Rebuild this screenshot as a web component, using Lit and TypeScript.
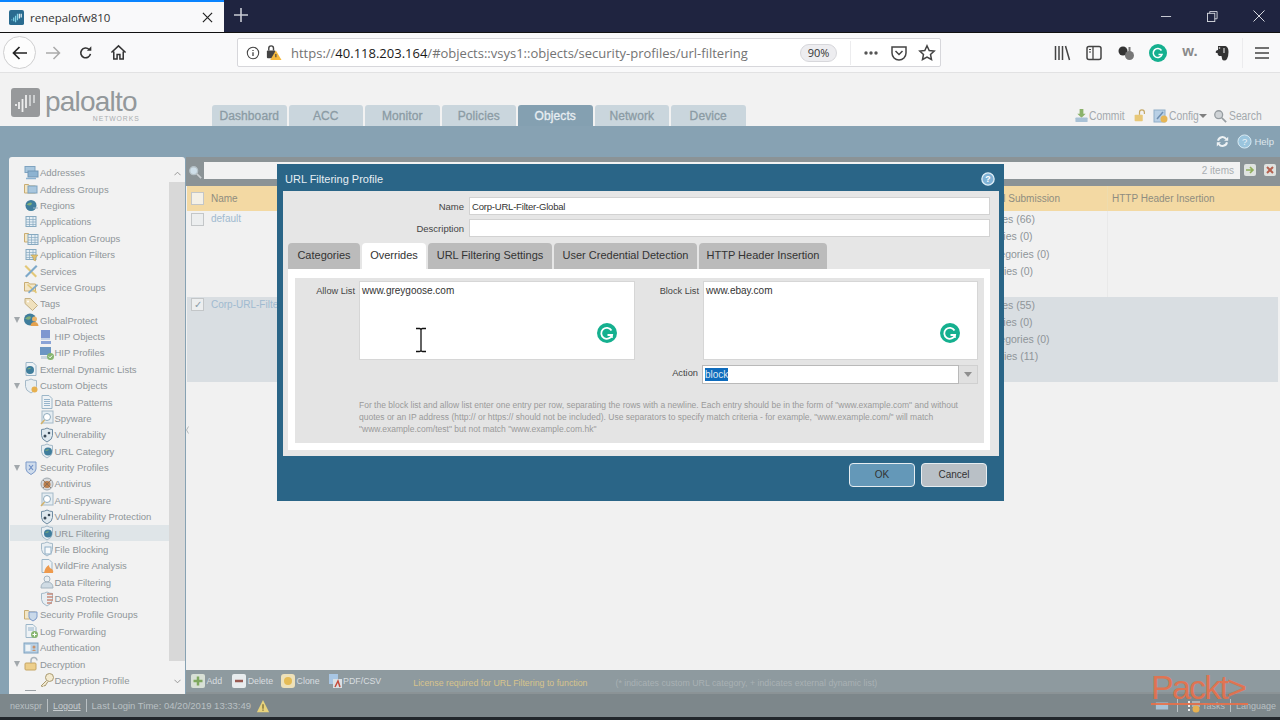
import { LitElement, html, css, svg } from "lit";
import { customElement } from "lit/decorators.js";

const i16 = (inner: unknown, cls = "ic") => html`<svg class=${cls} viewBox="0 0 16 16">${inner}</svg>`;

const globe = (x = 8, y = 8, r = 5) => svg`<circle cx=${x} cy=${y} r=${r} fill="#3f7d9c"/><path d="M${x - r + 1} ${y - 1}q${r - 1} -${r - 2} ${r} -1q-1 ${r - 2} -${r} 1z" fill="#7fae7a"/>`;
const docShape = svg`<path d="M3 1.500h7l3 3v10H3z" fill="#eef2f5" stroke="#9cb6c8"/>`;
const shieldShape = svg`<path d="M2.500 2.500q3 0 5.500-1.500q2.500 1.500 5.500 1.500v6q0 4-5.500 6.500q-5.500-2.500-5.500-6.500z" fill="#e8eef2" stroke="#a4b9c8"/>`;
const folder = svg`<path d="M1.500 3.500h4l1 1.500h6v7h-11z" fill="#f3e6c6" stroke="#c9ad72"/>`;
const gridLines = svg`<rect x="3" y="2.500" width="10" height="10" fill="#e4edf3" stroke="#86a9c0"/><path d="M3 5.500h10M3 8h10M3 10.500h10M6.500 3v9M10 3v9" stroke="#86a9c0" stroke-width=".7"/>`;

const icons: Record<string, unknown> = {
  net: svg`<rect x="2" y="1.500" width="10" height="6" fill="#a9c7de" stroke="#7fa3c0"/><rect x="5" y="6" width="10" height="6" fill="#8db3d1" stroke="#7297b5"/><path d="M3 13.500h10" stroke="#8db3d1" stroke-width="1.500"/>`,
  netf: svg`${folder}<rect x="5" y="5" width="9" height="7" fill="#a9c7de" stroke="#7fa3c0"/>`,
  globe: svg`${globe(8, 7.5, 5.5)}<path d="M10 10h5" stroke="#9fb7c6"/>`,
  table: gridLines,
  tablef: svg`${folder}<g transform="translate(2 2)">${gridLines}</g>`,
  filter: svg`${gridLines}<path d="M8 8h7l-2.500 3v3l-2-1v-2z" fill="#e0c070" stroke="#b89a4a" stroke-width=".5"/>`,
  tools: svg`<path d="M3 2l11 11-1.500 1.500L1.500 3.500z" fill="#e3c878"/><path d="M13 2L2 13l1.500 1.500L14.500 3.500z" fill="#7fa9c9"/>`,
  toolsf: svg`${folder}<path d="M5 5l9 8-1 1.500L4 6z" fill="#e3c878"/><path d="M14 5L5 13l1 1.500L15 6.500z" fill="#7fa9c9"/>`,
  tag: svg`<path d="M2 2.500h5.500l7 7-5 5-7.500-7z" fill="#f0e1bd" stroke="#c4b083"/><circle cx="5" cy="5.500" r="1" fill="#fff"/>`,
  gp: svg`${globe(7, 7.5, 6)}<circle cx="11.500" cy="7" r="2.500" fill="#e9b36a"/><path d="M7.500 14q.5-4 4-4t4 4z" fill="#e4a24f"/>`,
  hipo: svg`<rect x="2" y="1" width="9" height="8" fill="#7e97d0"/><rect x="2" y="9" width="9" height="2" fill="#c7d3e6"/><rect x="2" y="12" width="10" height="3" fill="#8aa3d6"/>`,
  hipp: svg`<rect x="1" y="2" width="11" height="8" fill="#6c96c2"/><rect x="2" y="11" width="8" height="3" fill="#cbd6de"/><circle cx="11.500" cy="11.500" r="3.500" fill="#86b56f"/><path d="M9.800 11.500l1.300 1.300 2-2.300" stroke="#fff" fill="none"/>`,
  edl: svg`${docShape}${globe(7, 9, 4)}`,
  custom: svg`${shieldShape}<circle cx="11.500" cy="11.500" r="3" fill="#e6b04f"/>`,
  doc: svg`${docShape}<path d="M5 5.500h6M5 7.500h6M5 9.500h6M5 11.500h6" stroke="#7fa3c0" stroke-width=".8"/>`,
  spy: svg`<rect x="3" y="1" width="11" height="12" fill="#e5edf2" stroke="#a4b9c8"/><circle cx="8" cy="7" r="3.500" fill="#fff" stroke="#8eaabd"/><path d="M5.500 10l-3.500 4" stroke="#d3b26a" stroke-width="1.500"/>`,
  vuln: svg`<path d="M2.500 2.500q3 0 5.500-1.500q2.500 1.500 5.500 1.500v6q0 4-5.500 6.500q-5.500-2.500-5.500-6.500z" fill="#dfe8ee" stroke="#6f8ca2"/><circle cx="6" cy="9" r="1.500" fill="#3a4a58"/><circle cx="10" cy="6" r="1.300" fill="#3a4a58"/>`,
  url: svg`${shieldShape}${globe(9, 8.5, 4)}`,
  secprof: svg`<path d="M3 2h10v7q0 3-5 5.500q-5-2.500-5-5.500z" fill="#cfdcec" stroke="#7d9ac9"/><path d="M6 5l4 5M10 5l-4 5" stroke="#6f8fc6" stroke-width="1.200"/>`,
  av: svg`<circle cx="8" cy="8" r="6" fill="#d6d9dc" stroke="#a0a8ae"/><circle cx="8" cy="8.500" r="3.500" fill="#bd7f4c"/><path d="M4 4l8 8M12 4l-8 8" stroke="#7f6a58" stroke-width=".8"/>`,
  file: svg`${shieldShape}<rect x="6" y="6" width="6" height="7" fill="#f7fafc" stroke="#90aec5"/>`,
  fire: svg`${docShape}<path d="M5 15q1-6 5-8 0 3 3 4 2 2 1 4z" fill="#ee9a4d"/>`,
  data: svg`<circle cx="8" cy="5" r="3" fill="#eaeff2" stroke="#a4b4c0"/><path d="M2 14q0-6 6-6t6 6z" fill="#cfdbe4" stroke="#a4b4c0"/>`,
  dos: svg`${shieldShape}<path d="M8 3h6M8 6h6M8 9h6M8 12h5" stroke="#c88a7a" stroke-width="1.500"/>`,
  spg: svg`${folder}<path d="M6 5h8v5q0 2-4 4q-4-2-4-4z" fill="#c9d9ea" stroke="#7d9ac9"/>`,
  log: svg`${docShape}<path d="M5 5h6M5 7h6" stroke="#7fa3c0" stroke-width=".8"/><circle cx="11.500" cy="11.500" r="3.500" fill="#86b56f"/><path d="M9.500 11.500h4M11.500 9.500v4" stroke="#fff"/>`,
  auth: svg`<rect x="1" y="3" width="14" height="10" fill="#b9d0e3" stroke="#7ea2c0"/><rect x="2.500" y="5" width="5" height="6" fill="#eef3f6"/><circle cx="11" cy="7" r="1.500" fill="#c8906a"/><path d="M9 11q2-3 4 0z" fill="#c8906a"/>`,
  dec: svg`<rect x="2" y="7" width="11" height="7" rx="1" fill="#edcf8c" stroke="#c6a664"/><path d="M8 7V4.500a3 3 0 0 1 6 0" fill="none" stroke="#aab4bb" stroke-width="1.500"/>`,
  key: svg`<circle cx="10.500" cy="5.500" r="4" fill="#f3ead0" stroke="#a99a70"/><path d="M7.500 8.500L2 14l2 .5 1-1 1 .5 3-4.500" fill="#f3ead0" stroke="#a99a70"/>`,
};

type Row = { t: string; i: string; lvl?: number; open?: boolean; sel?: boolean };
const tree: Row[] = [
  { t: "Addresses", i: "net" }, { t: "Address Groups", i: "netf" }, { t: "Regions", i: "globe" },
  { t: "Applications", i: "table" }, { t: "Application Groups", i: "tablef" }, { t: "Application Filters", i: "filter" },
  { t: "Services", i: "tools" }, { t: "Service Groups", i: "toolsf" }, { t: "Tags", i: "tag" },
  { t: "GlobalProtect", i: "gp", open: true }, { t: "HIP Objects", i: "hipo", lvl: 1 }, { t: "HIP Profiles", i: "hipp", lvl: 1 },
  { t: "External Dynamic Lists", i: "edl" }, { t: "Custom Objects", i: "custom", open: true },
  { t: "Data Patterns", i: "doc", lvl: 1 }, { t: "Spyware", i: "spy", lvl: 1 }, { t: "Vulnerability", i: "vuln", lvl: 1 }, { t: "URL Category", i: "url", lvl: 1 },
  { t: "Security Profiles", i: "secprof", open: true }, { t: "Antivirus", i: "av", lvl: 1 }, { t: "Anti-Spyware", i: "spy", lvl: 1 },
  { t: "Vulnerability Protection", i: "vuln", lvl: 1 }, { t: "URL Filtering", i: "url", lvl: 1, sel: true }, { t: "File Blocking", i: "file", lvl: 1 },
  { t: "WildFire Analysis", i: "fire", lvl: 1 }, { t: "Data Filtering", i: "data", lvl: 1 }, { t: "DoS Protection", i: "dos", lvl: 1 },
  { t: "Security Profile Groups", i: "spg" }, { t: "Log Forwarding", i: "log" }, { t: "Authentication", i: "auth" },
  { t: "Decryption", i: "dec", open: true }, { t: "Decryption Profile", i: "key", lvl: 1 },
];

const navTabs = ["Dashboard", "ACC", "Monitor", "Policies", "Objects", "Network", "Device"];
const grammarly = html`<svg class="gram" viewBox="0 0 20 20"><circle cx="10" cy="10" r="10" fill="#15b08f"/><path d="M14.500 7.500A5.500 5.500 0 1 0 15 12h-4.500" fill="none" stroke="#fff" stroke-width="1.800"/><path d="M15 12v3" stroke="#fff" stroke-width="1.500"/></svg>`;

@customElement("app-root")
export class AppRoot extends LitElement {
  static styles = css`
    :host { display: block; position: relative; width: 1280px; height: 720px; overflow: hidden; font-family: "Liberation Sans", Arial, sans-serif; font-size: 10px; background: #f1f1f1; color: #8f9599; }
    svg { display: block; flex: none; }
    .ic { width: 16px; height: 16px; }

    .tabbar { height: 33px; background: #1f2440; display: flex; align-items: stretch; border-bottom: 1px solid #111; box-sizing: border-box; }
    .btab { width: 224px; background: #f9f9fa; border-top: 2px solid #0a84ff; box-sizing: border-box; display: flex; align-items: center; padding: 0 11px 0 9px; gap: 6px; font: 11.500px "Open Sans", sans-serif; color: #333; }
    .btab span { flex: 1; }
    .plus { margin: 7px 0 0 9px; width: 16px; height: 16px; }
    .winbtns { margin-left: auto; display: flex; align-items: center; gap: 35px; padding-right: 15px; }

    .toolbar { height: 40px; background: #f9f9fa; border-bottom: 1px solid #e2e2e3; display: flex; align-items: center; box-sizing: border-box; }
    .back { width: 33px; height: 33px; margin-left: 3px; border: 1px solid #cfcfd0; border-radius: 50%; box-sizing: border-box; background: #fdfdfd; display: flex; align-items: center; justify-content: center; }
    .navs { display: flex; align-items: center; gap: 16px; margin-left: 8px; width: 193px; }
    .urlbar { width: 704px; height: 29px; background: #fff; border: 1px solid #d7d7db; border-radius: 2px; box-sizing: border-box; display: flex; align-items: center; padding: 0 4px 0 8px; font: 13px "Open Sans", sans-serif; color: #737373; white-space: nowrap; }
    .urlbar b { font-weight: 400; color: #1a1a1a; }
    .urlsp { margin-left: 9px; flex: 1; }
    .zoomp { height: 18px; width: 37px; background: #ededf0; border: 1px solid #d7d7db; border-radius: 9px; box-sizing: border-box; font-size: 11px; color: #333; display: flex; align-items: center; justify-content: center; margin-right: 13px; }
    .usep { width: 1px; height: 24px; background: #ececee; margin-right: 11px; }
    .urlic { display: flex; align-items: center; gap: 10px; }
    .tools { margin-left: auto; display: flex; align-items: center; padding-right: 9px; }
    .tools svg { width: 18px; height: 18px; margin-left: 14px; }
    .w { font: bold 15px "Liberation Sans", sans-serif; color: #8a8a8a; margin-left: 14px; width: 18px; text-align: center; margin-top: -4px; }
    .tsep { width: 1px; height: 30px; background: #ececee; margin: 0 -4px 0 11px; }

    .head { height: 53px; background: #f2f2f2; display: flex; align-items: flex-start; position: relative; }
    .logo { display: flex; margin: 15px 0 0 11px; width: 201px; }
    .logomark { width: 29px; height: 29px; }
    .logotext { margin-left: 5px; font: 28px/27px "Liberation Sans", sans-serif; color: #93989b; letter-spacing: -.8px; height: 44px; }
    .networks { display: block; font: 6.800px/7px "Liberation Sans", sans-serif; letter-spacing: .95px; color: #a9adb0; text-align: right; margin: 0 -3px 0 0; }
    .navtabs { display: flex; gap: 2px; margin-top: 32px; height: 21px; }
    .navtab { width: 74.500px; box-sizing: border-box; background: #cad6dd; color: #8b9ba4; font: 12px/22px "Liberation Sans", sans-serif; -webkit-text-stroke: .3px currentColor; letter-spacing: .1px; text-align: center; border-radius: 3px 3px 0 0; }
    .navtab.on { background: #84a0b1; color: #e8eef2; }
    .hright { margin-left: auto; display: flex; align-items: center; height: 17px; margin-top: 34px; padding-right: 19px; font: 12px "Liberation Sans", sans-serif; color: #a3a9ad; }
    .hright svg { width: 15px; height: 15px; }
    .hright span { transform: scaleX(.86); transform-origin: left; }
    .hcommit { width: 44px; }
    .hlock { width: 13px !important; }
    .hcfg { margin-left: 7px; width: 16px !important; height: 16px !important; }
    .hconfig { width: 30px; }
    .hcaret { border: 4px solid transparent; border-top: 4px solid #7f7f7f; border-bottom: 0; margin-right: 6px; }
    .hsearch { width: 14px !important; height: 14px !important; }
    .hsearchtxt { width: 32px; margin-left: 2px; }

    .band { height: 31px; background: #87a2b3; display: flex; justify-content: flex-end; align-items: center; padding-right: 6px; gap: 5px; color: #dfe7ec; font-size: 9.500px; }
    .bhelp { margin-left: 3px; }
    .bhelptxt { margin-left: -3px; }

    .work { height: 537px; display: grid; grid-template-columns: 9px 176px 1px 1fr; background: #87a2b3; }
    .side { grid-column: 2; background: #f2f2f2; border-radius: 3px 3px 0 0; display: flex; overflow: hidden; font-size: 9.500px; }
    .tree { flex: 1; padding-top: 7.600px; overflow: hidden; min-width: 0; }
    .row { height: 16.390px; display: flex; align-items: center; padding-left: 5px; white-space: nowrap; }
    .row.l1 { padding-left: 29.500px; }
    .row.cur { background: #dfe5e8; margin-left: 1px; padding-left: 28.500px; }
    .row .tw { width: 9px; flex: none; }
    .row .ic { margin-right: 1px; }
    .row.l1 .ic { margin-right: 0; }
    .tri { width: 0; height: 0; border: 3.500px solid transparent; border-top: 6px solid #a2a8ac; border-bottom: 0; }
    .treeend { width: 11px; height: 1px; background: #9ba1a5; margin: 1px 0 0 16px; }
    .sbar { width: 16px; display: flex; flex-direction: column; align-items: stretch; padding-top: 8px; }
    .sarrow { height: 17px; display: flex; align-items: center; justify-content: center; }
    .strack { background: #d8d8d8; height: 479px; }
    .sgap { height: 12px; }

    .main { grid-column: 4; display: flex; flex-direction: column; background: #8b9396; min-width: 0; position: relative; }
    .handle { position: absolute; left: 0; top: 269px; width: 3px; height: 8px; }
    .search { height: 29px; display: flex; align-items: center; padding-right: 3px; }
    .searchic { width: 18px; display: flex; justify-content: center; }
    .sinput { width: 1036px; height: 17px; background: #f2f2f2; display: flex; align-items: center; justify-content: flex-end; padding-right: 6px; box-sizing: border-box; color: #a9aeb1; margin-top: -3px; }
    .sbtns { margin-left: 4px; display: flex; gap: 8px; margin-top: -3px; }
    .sbtns svg { width: 12px; height: 12px; }
    .table { flex: 1; background: #f1f1f1; display: flex; flex-direction: column; padding-left: 1px; }
    .thead, .trow { display: grid; grid-template-columns: 19px 120px 610px 171px 171px 1fr; }
    .thead { height: 25px; background: #f3d9a3; color: #8f8d80; align-items: center; font-size: 10px; }
    .trow { height: 85.500px; margin-right: 2px; }
    .trow.on { background: #d9dee2; }
    .cb { width: 13px; height: 13px; box-sizing: border-box; border: 1px solid #c3c6c8; background: #eceeef; margin: 1.500px 0 0 4px; font-size: 10px; line-height: 11px; text-align: center; color: #8a9aa6; }
    .thead .cb { margin-top: 0; background: #f4f0e6; }
    .nm { color: #a0bad0; padding: 2px 0 0 5px; white-space: nowrap; overflow: hidden; }
    .thead .nm { color: #8f8d80; padding-top: 0; }
    .cred { padding-left: 2px; line-height: 17.300px; white-space: nowrap; font-size: 10.500px; }
    .hd { border-left: 1px solid #e9e9e9; }
    .trow.on .hd { border-left-color: transparent; }
    .hcell { padding-left: 4px; border-left: 1px solid #eedcae; height: 100%; display: flex; align-items: center; }
    .hcred { justify-content: flex-end; padding-right: 47px; }
    .bbar { height: 22px; display: flex; align-items: center; background: #8e9a9f; color: #d9dee0; white-space: nowrap; margin-bottom: 2px; font-size: 8.800px; padding-left: 5px; }
    .bbar svg { width: 14px; height: 14px; }
    .a { display: flex; align-items: center; gap: 1.500px; }
    .a.del { margin-left: 10px; }
    .a.clone { margin-left: 8px; }
    .a.pdf { margin-left: 8px; }
    .lic { color: #d8c48c; margin: 3px 0 0 32px; }
    .ind { color: #a9b1b4; margin: 3px 0 0 28px; }

    .foot { height: 23px; background: #7d878b; color: #b9c0c3; display: flex; align-items: center; padding: 0 4px 0 10px; white-space: nowrap; font-size: 9px; }
    .foot u { color: #c7cdd0; }
    .lastlog { font-size: 9.500px; }
    .warn { margin-left: 5px; }
    .pipe { width: 1px; height: 13px; background: #b9c0c3; margin: 0 5px; }
    .pipe.w8 { margin: 0 8px; }
    .fr { margin-left: auto; display: flex; align-items: center; }
    .end { height: 3px; background: #22272c; }

    .modal { position: absolute; left: 277px; top: 164px; width: 727px; height: 337px; background: #2a6587; box-sizing: border-box; display: flex; flex-direction: column; }
    .mtitle { height: 27px; display: flex; align-items: center; justify-content: space-between; padding: 3px 9px 0 8px; box-sizing: border-box; color: #e6eef3; font-size: 11px; }
    .mbody { margin: 0 5px 0 6px; height: 265px; background: #e6e6e6; display: flex; flex-direction: column; color: #333; }
    .field { display: grid; grid-template-columns: 181px 521px; column-gap: 5px; align-items: center; height: 18px; margin-top: 4px; }
    .field:first-child { margin-top: 6px; }
    .field label { text-align: right; color: #444; font-size: 9.500px; }
    .inp { height: 18px; background: #fff; border: 1px solid #d2d2d2; box-sizing: border-box; padding-left: 2px; line-height: 18px; color: #333; font-size: 9.500px; letter-spacing: -.2px; }
    .mtabs { display: flex; gap: 2px; margin: 6px 0 0 5px; height: 26px; }
    .mtab { background: #bbbbbb; color: #333; border-radius: 4px 4px 0 0; font-size: 11px; line-height: 25px; text-align: center; box-sizing: border-box; white-space: nowrap; }
    .mtab.on { background: #fff; }
    .panel { margin-left: 5px; width: 702px; height: 181px; background: #fff; padding: 9px 6px 7px 7px; box-sizing: border-box; }
    .inner { height: 165px; background: #e4e4e4; box-sizing: border-box; display: flex; flex-direction: column; padding-top: 3px; }
    .lists { display: grid; grid-template-columns: 64px 276px 68px 275px; height: 79px; }
    .lists label { text-align: right; padding: 5px 4px 0 0; color: #444; font-size: 9.200px; }
    .ta { background: #fff; border: 1px solid #d6d6d6; box-sizing: border-box; padding: 3px 2px; position: relative; color: #333; }
    .gram { position: absolute; width: 20px; height: 20px; right: 17px; bottom: 16px; }
    .action { display: grid; grid-template-columns: 407px 257px 19px; height: 18px; margin-top: 5px; }
    .action label { text-align: right; padding: 3px 4px 0 0; color: #444; font-size: 9.300px; }
    .selbox { background: #fff; border: 1px solid #b9b9b9; box-sizing: border-box; padding: 2px; line-height: 13px; color: #333; }
    .selbox i { font-style: normal; background: #0f6cbd; color: #dfe9f2; display: inline-block; }
    .drop { background: #e0e0e0; border: 1px solid #d0d0d0; border-left: 0; display: flex; align-items: center; justify-content: center; }
    .drop b { border: 4.500px solid transparent; border-top: 5px solid #8f8f8f; border-bottom: 0; }
    .help { margin: 16px 0 0 64px; font-size: 8.500px; line-height: 12px; color: #9a9a9a; white-space: nowrap; }
    .mbtns { display: flex; justify-content: flex-end; gap: 6px; padding: 7px 17px 0 0; }
    .btn { height: 24px; width: 66px; box-sizing: border-box; border: 1px solid #e6edf1; border-radius: 4px; background: #b9c0c6; color: #333; text-align: center; line-height: 22px; }
    .btn.ok { background: #6498b8; }
    .cursor { position: absolute; left: 415px; top: 327px; width: 12px; height: 26px; }
    .packt { position: absolute; left: 1151px; top: 672px; width: 97px; border-bottom: 2px solid #e8704a; font: 34px/31px "Liberation Sans", sans-serif; color: #e8704a; opacity: .9; letter-spacing: -1.800px; white-space: nowrap; }
  `;

  render() {
    const dots = html`<svg viewBox="0 0 18 18" width="18" height="18"><circle cx="4" cy="9" r="1.700" fill="#555"/><circle cx="9" cy="9" r="1.700" fill="#555"/><circle cx="14" cy="9" r="1.700" fill="#555"/></svg>`;
    const mtabs: [string, number, boolean][] = [
      ["Categories", 72, false], ["Overrides", 64, true], ["URL Filtering Settings", 124, false],
      ["User Credential Detection", 143, false], ["HTTP Header Insertion", 128, false],
    ];
    return html`
      <div class="tabbar">
        <div class="btab">
          <svg viewBox="0 0 16 16" width="15" height="15"><rect width="16" height="16" rx="2" fill="#2a6b8f"/><path d="M3 11v-1M5 12V8M7 13V6M9 11V4" stroke="#7fd1e6" stroke-width="1.300"/><path d="M11 9V4M13 8V4" stroke="#e7f3f7" stroke-width="1.300"/></svg>
          <span>renepalofw810</span>
          <svg viewBox="0 0 12 12" width="11" height="11"><path d="M1 1l10 10M11 1L1 11" stroke="#222" stroke-width="1.300"/></svg>
        </div>
        <svg class="plus" viewBox="0 0 16 16"><path d="M8 1v14M1 8h14" stroke="#c9cbd4" stroke-width="1.600"/></svg>
        <div class="winbtns">
          <svg viewBox="0 0 12 12" width="11" height="11"><path d="M0 6h11" stroke="#d7d9e0"/></svg>
          <svg viewBox="0 0 12 12" width="11" height="11"><rect x=".5" y="2.500" width="8" height="9" fill="none" stroke="#d7d9e0"/><path d="M3 2.500V.5h8v8H8.500" fill="none" stroke="#d7d9e0"/></svg>
          <svg viewBox="0 0 12 12" width="12" height="12"><path d="M.5.5l11 11M11.500.5l-11 11" stroke="#d7d9e0"/></svg>
        </div>
      </div>
      <div class="toolbar">
        <div class="back"><svg viewBox="0 0 18 18" width="18" height="18"><path d="M16 9H2.500M8.500 3L2.500 9l6 6" fill="none" stroke="#222" stroke-width="1.700"/></svg></div>
        <div class="navs">
          <svg viewBox="0 0 18 18" width="18" height="18"><path d="M2 9h13.500M9.500 3l6 6-6 6" fill="none" stroke="#aaa" stroke-width="1.500"/></svg>
          <svg viewBox="0 0 18 18" width="16" height="16"><path d="M14 10a5.500 5.500 0 1 1-1.500-5" fill="none" stroke="#333" stroke-width="1.800"/><path d="M15 1.500v5h-5z" fill="#333"/></svg>
          <svg viewBox="0 0 18 18" width="17" height="17"><path d="M1.500 9L9 2l7.500 7M4 8v8h3.500v-5h3v5H14V8" fill="none" stroke="#333" stroke-width="1.600"/></svg>
        </div>
        <div class="urlbar">
          <svg viewBox="0 0 16 16" width="14" height="14"><circle cx="8" cy="8" r="6.500" fill="none" stroke="#444" stroke-width="1.200"/><path d="M8 7v4.500M8 4.500v1.300" stroke="#444" stroke-width="1.500"/></svg>
          <svg viewBox="0 0 18 18" width="17" height="17" style="margin-left:5px"><rect x="2" y="7" width="9" height="8" rx="1" fill="#444"/><path d="M4 7V4.500a2.500 2.500 0 0 1 5 0V7" fill="none" stroke="#444" stroke-width="1.500"/><path d="M11.500 7L17.500 17H5.500z" fill="#f6b93b"/><path d="M11.500 10.500v3.500" stroke="#444" stroke-width="1.200"/></svg>
          <span class="urlsp">https://<b>40.118.203.164</b>/#objects::vsys1::objects/security-profiles/url-filtering</span>
          <span class="zoomp">90%</span>
          <span class="usep"></span>
          <span class="urlic">
            ${dots}
            <svg viewBox="0 0 18 18" width="18" height="18"><path d="M2 3h14v6a7 7 0 0 1-14 0z" fill="none" stroke="#444" stroke-width="1.500"/><path d="M5.500 7L9 10.500 12.500 7" fill="none" stroke="#444" stroke-width="1.500"/></svg>
            <svg viewBox="0 0 18 18" width="18" height="18"><path d="M9 1.800l2.200 4.700 5 .6-3.700 3.400 1 5L9 13l-4.500 2.500 1-5-3.700-3.400 5-.6z" fill="none" stroke="#444" stroke-width="1.500"/></svg>
          </span>
        </div>
        <div class="tools">
          <svg viewBox="0 0 18 18"><path d="M2.500 2v14M6 2v14M9.500 2v14M12.500 2l4 14" fill="none" stroke="#444" stroke-width="1.500"/></svg>
          <svg viewBox="0 0 18 18"><rect x="2" y="2.500" width="14" height="13" rx="2" fill="none" stroke="#444" stroke-width="1.500"/><path d="M8 3v12" stroke="#444" stroke-width="1.300"/><path d="M4 5.500h2M4 8h2" stroke="#444"/></svg>
          <svg viewBox="0 0 18 18"><circle cx="6" cy="7" r="4.500" fill="#333"/><circle cx="12.500" cy="11.500" r="4.500" fill="#777"/><path d="M12.500 3v5" stroke="#777" stroke-width="2"/></svg>
          <svg viewBox="0 0 18 18"><circle cx="9" cy="9" r="9" fill="#15b08f"/><path d="M12.500 6.500A4.500 4.500 0 1 0 13 10.500H9.500" fill="none" stroke="#fff" stroke-width="1.500"/></svg>
          <span class="w">w.</span>
          <svg viewBox="0 0 18 18"><path d="M5 2h7.500q3 1 3 6 0 4-1.500 7-1 1.500-3 1.500-2 0-2-2l-.5-2.500H6q-1.500-1-1.500-3H3.500Q2 9 3 7q1-1 2-1z" fill="#333"/><path d="M11 4v5" stroke="#f9f9fa"/><circle cx="6.500" cy="4" r=".8" fill="#f9f9fa"/></svg>
          <span class="tsep"></span>
          <svg viewBox="0 0 18 18"><path d="M2 4h14M2 9h14M2 14h14" stroke="#444" stroke-width="1.600"/></svg>
        </div>
      </div>
      <div class="head">
        <div class="logo">
          <svg class="logomark" viewBox="0 0 29 29"><rect width="29" height="29" rx="3" fill="#97999b"/><path d="M5 18v-2M8 21v-7M11.500 24V11M15 20V7" stroke="#eee" stroke-width="1.800"/><path d="M19 18V7M23 15V7" stroke="#d3d5d6" stroke-width="1.800"/></svg>
          <div class="logotext">paloalto<span class="networks">NETWORKS</span></div>
        </div>
        <div class="navtabs">
          ${navTabs.map((t) => html`<div class="navtab ${t === "Objects" ? "on" : ""}">${t}</div>`)}
        </div>
        <div class="hright">
          <svg viewBox="0 0 16 16"><path d="M6 1h4v5h2.500L8 10.500 3.500 6H6z" fill="#8cb36b"/><rect x="1.500" y="10" width="13" height="5" rx="1" fill="#a9c2d6"/></svg>
          <span class="hcommit">Commit</span>
          <svg class="hlock" viewBox="0 0 16 16"><rect x="2" y="7" width="10" height="8" rx="1" fill="#e8c878"/><path d="M8 7V4a3 3 0 0 1 6 0v2" fill="none" stroke="#c5a866" stroke-width="1.500"/></svg>
          <svg class="hcfg" viewBox="0 0 16 16"><rect x="1" y="2" width="11" height="12" fill="#b9d0e5" stroke="#90aec8"/><circle cx="11" cy="11" r="3.500" fill="#e6b655"/><path d="M4 11l6-7" stroke="#6f8fb0" stroke-width="1.500"/></svg>
          <span class="hconfig">Config</span>
          <i class="hcaret"></i>
          <svg class="hsearch" viewBox="0 0 16 16"><circle cx="6.500" cy="6.500" r="4.500" fill="#cfd3d6" stroke="#979da1" stroke-width="1.500"/><path d="M10 10l5 5" stroke="#979da1" stroke-width="2"/></svg>
          <span class="hsearchtxt">Search</span>
        </div>
      </div>
      <div class="band">
        <svg viewBox="0 0 16 16" width="13" height="13"><path d="M2.500 7a5.500 5.500 0 0 1 10-2" fill="none" stroke="#eef2f4" stroke-width="2.500"/><path d="M15 2v5h-5z" fill="#eef2f4"/><path d="M13.500 9a5.500 5.500 0 0 1-10 2" fill="none" stroke="#eef2f4" stroke-width="2.500"/><path d="M1 14V9h5z" fill="#eef2f4"/></svg>
        <svg class="bhelp" viewBox="0 0 16 16" width="15" height="15"><circle cx="8" cy="8" r="7" fill="#9bc5dd" stroke="#dcecf4"/><text x="8" y="11.500" font-size="10" text-anchor="middle" fill="#eaf3f8" font-family="Liberation Sans">?</text></svg>
        <span class="bhelptxt">Help</span>
      </div>
      <div class="work">
        <div class="side">
          <div class="tree">
            ${tree.map((r) => html`<div class="row ${r.lvl ? "l1" : ""} ${r.sel ? "cur" : ""}">
              ${r.lvl ? "" : html`<span class="tw">${r.open ? html`<div class="tri"></div>` : ""}</span>`}
              ${i16(icons[r.i])}<span>${r.t}</span>
            </div>`)}
            <div class="treeend"></div>
          </div>
          <div class="sbar">
            <div class="sarrow"><svg viewBox="0 0 8 5" width="7" height="5"><path d="M.5 4.500L4 1l3.500 3.500" fill="none" stroke="#8d8d8d"/></svg></div>
            <div class="strack"></div>
            <div class="sgap"></div>
            <div class="sarrow"><svg viewBox="0 0 8 5" width="7" height="5"><path d="M.5.5L4 4 7.500.5" fill="none" stroke="#8d8d8d"/></svg></div>
          </div>
        </div>
        <div class="main">
          <div class="search">
            <div class="searchic"><svg viewBox="0 0 16 16" width="14" height="14"><circle cx="6.500" cy="6.500" r="4.500" fill="#cfdfe9" stroke="#b6c2c8" stroke-width="1.500"/><path d="M10 10l5 5" stroke="#c9ced1" stroke-width="2"/></svg></div>
            <div class="sinput">2 items</div>
            <div class="sbtns">
              <svg viewBox="0 0 12 12"><rect width="12" height="12" rx="2" fill="#dfe3e0"/><path d="M2 6h7M6 3l3 3-3 3" fill="none" stroke="#8fae5a" stroke-width="1.600"/></svg>
              <svg viewBox="0 0 12 12"><rect width="12" height="12" rx="2" fill="#dfe3e0"/><path d="M3 3l6 6M9 3l-6 6" stroke="#b5614f" stroke-width="2"/></svg>
            </div>
          </div>
          <div class="table">
            <div class="thead">
              <div class="cb"></div><div class="nm">Name</div><div></div>
              <div class="hcell hcred">Credential Submission</div>
              <div class="hcell">HTTP Header Insertion</div><div></div>
            </div>
            <div class="trow">
              <div class="cb"></div><div class="nm">default</div><div></div>
              <div class="cred">Alert Categories (66)<br>Allow Categories (0)<br>Continue Categories (0)<br>Block Categories (0)</div>
              <div class="hd"></div><div></div>
            </div>
            <div class="trow on">
              <div class="cb">✓</div><div class="nm">Corp-URL-Filter-Global</div><div></div>
              <div class="cred">Alert Categories (55)<br>Allow Categories (0)<br>Continue Categories (0)<br>Block Categories (11)</div>
              <div class="hd"></div><div></div>
            </div>
          </div>
          <div class="bbar">
            <span class="a"><svg viewBox="0 0 14 14"><rect width="14" height="14" rx="2" fill="#d8e0d6"/><path d="M7 2.500v9M2.500 7h9" stroke="#7fa85f" stroke-width="2.500"/></svg>Add</span>
            <span class="a del"><svg viewBox="0 0 14 14"><rect width="14" height="14" rx="2" fill="#e8ecee"/><path d="M3 7h8" stroke="#9a5a52" stroke-width="2.500"/></svg>Delete</span>
            <span class="a clone"><svg viewBox="0 0 14 14"><rect width="14" height="14" rx="3" fill="#eee1b9"/><circle cx="7" cy="7" r="4" fill="#e5bb55"/></svg>Clone</span>
            <span class="a pdf"><svg viewBox="0 0 14 14"><rect x="1" y="0" width="9" height="10" fill="#a8c6e4"/><rect x="5" y="5" width="9" height="9" fill="#d9e0e4"/><path d="M7 13l3-6 2 6" fill="none" stroke="#c64b3c" stroke-width="1.500"/></svg>PDF/CSV</span>
            <span class="lic">License required for URL Filtering to function</span>
            <span class="ind">(* indicates custom URL category, + indicates external dynamic list)</span>
          </div>
          <svg class="handle" viewBox="0 0 3 8"><path d="M2.500.5L.5 4l2 3.500" fill="none" stroke="#b5b8ba"/></svg>
        </div>
      </div>
      <div class="foot">
        <span>nexuspr</span><i class="pipe"></i><u>Logout</u><i class="pipe"></i><span class="lastlog">Last Login Time: 04/20/2019 13:33:49</span>
        <svg class="warn" viewBox="0 0 16 16" width="14" height="14"><path d="M8 1l7 14H1z" fill="#e8d37c"/><path d="M8 6v5M8 12v1.500" stroke="#6a5d2a" stroke-width="1.300"/></svg>
        <div class="fr">
          <svg viewBox="0 0 16 16" width="14" height="14"><rect x="1" y="4" width="14" height="8" fill="#a9c2d6"/></svg>
          <i class="pipe w8"></i>
          <svg viewBox="0 0 16 16" width="16" height="16"><path d="M2 3h2v2H2zM2 7h2v2H2zM2 11h2v2H2z" fill="#eee"/><path d="M6 4h8M6 8h8" stroke="#ddd"/><circle cx="10" cy="11" r="3.500" fill="#e6b04f"/></svg>
          <span>Tasks</span>
          <i class="pipe"></i>
          <span>Language</span>
        </div>
      </div>
      <div class="end"></div>

      <div class="modal">
        <div class="mtitle">
          <span>URL Filtering Profile</span>
          <svg viewBox="0 0 16 16" width="14" height="14"><circle cx="8" cy="8" r="7" fill="#7fb2d6" stroke="#dfeef7" stroke-width="1.500"/><text x="8" y="11.500" font-size="10" font-weight="700" text-anchor="middle" fill="#fff" font-family="Liberation Sans">?</text></svg>
        </div>
        <div class="mbody">
          <div class="field"><label>Name</label><div class="inp">Corp-URL-Filter-Global</div></div>
          <div class="field"><label>Description</label><div class="inp"></div></div>
          <div class="mtabs">
            ${mtabs.map(([t, w, on]) => html`<div class="mtab ${on ? "on" : ""}" style="width:${w}px">${t}</div>`)}
          </div>
          <div class="panel">
            <div class="inner">
              <div class="lists">
                <label>Allow List</label><div class="ta">www.greygoose.com${grammarly}</div>
                <label>Block List</label><div class="ta">www.ebay.com${grammarly}</div>
              </div>
              <div class="action">
                <label>Action</label><div class="selbox"><i>block</i></div><div class="drop"><b></b></div>
              </div>
              <div class="help">For the block list and allow list enter one entry per row, separating the rows with a newline. Each entry should be in the form of "www.example.com" and without<br>quotes or an IP address (http:// or https:// should not be included). Use separators to specify match criteria - for example, "www.example.com/" will match<br>"www.example.com/test" but not match "www.example.com.hk"</div>
            </div>
          </div>
        </div>
        <div class="mbtns"><div class="btn ok">OK</div><div class="btn">Cancel</div></div>
      </div>
      <svg class="cursor" viewBox="0 0 12 26"><path d="M1 1.500h3.500q1.500 0 1.500 1.500v20q0 1.500-1.500 1.500H1M11 1.500H7.500Q6 1.500 6 3v20q0 1.500 1.500 1.500H11" fill="none" stroke="#111" stroke-width="1.300"/></svg>
      <div class="packt">Packt&gt;</div>
    `;
  }
}
